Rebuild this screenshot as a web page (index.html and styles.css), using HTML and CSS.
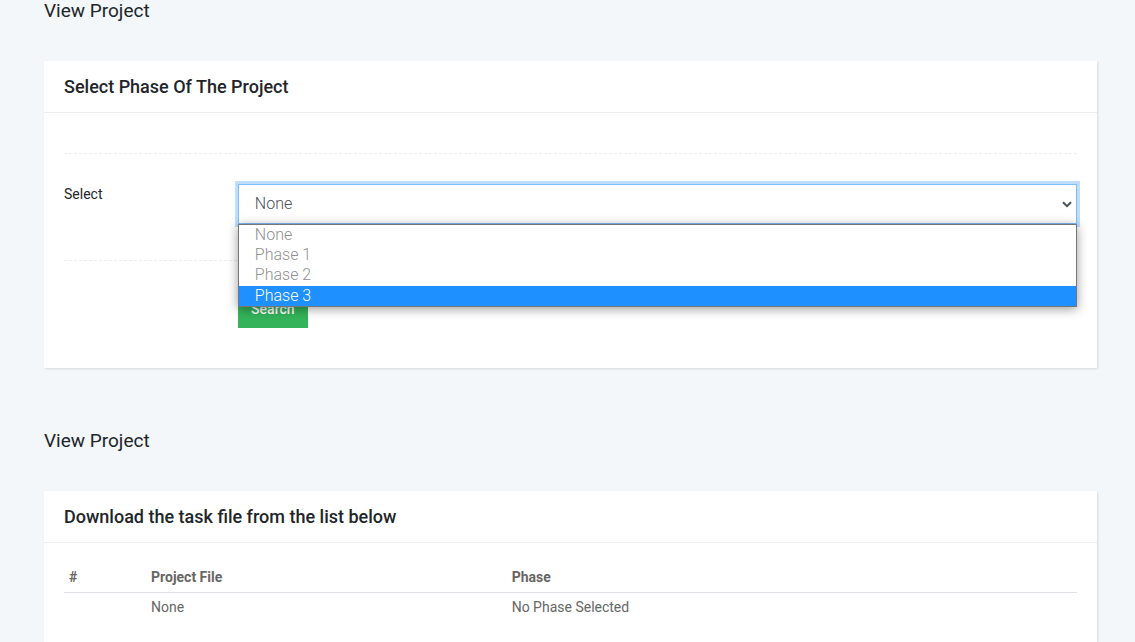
FILE: index.html
```html
<!DOCTYPE html>
<html lang="en">
<head>
<meta charset="utf-8">
<title>View Project</title>
<link rel="stylesheet" href="styles.css">
</head>
<body>
<main class="page">
  <section class="section">
    <h1 class="page-title">View Project</h1>
    <div class="card">
      <div class="card-header"><h2 class="card-title">Select Phase Of The Project</h2></div>
      <form class="card-body form-body">
        <hr class="line">
        <div class="form-row">
          <label class="form-label" for="phase">Select</label>
          <div class="select-wrap">
            <select class="form-select" id="phase">
              <option selected>None</option>
              <option>Phase 1</option>
              <option>Phase 2</option>
              <option>Phase 3</option>
            </select>
            <svg class="chevron" width="10" height="7" viewBox="0 0 10 7" aria-hidden="true"><path d="M1 1.2 L5 5.2 L9 1.2" fill="none" stroke="#495057" stroke-width="2"/></svg>
            <ul class="menu">
              <li class="menu-item">None</li>
              <li class="menu-item">Phase 1</li>
              <li class="menu-item">Phase 2</li>
              <li class="menu-item menu-item-active">Phase 3</li>
            </ul>
          </div>
        </div>
        <hr class="line">
        <div class="form-row">
          <div class="button-cell"><button class="btn" type="button">Search</button></div>
        </div>
      </form>
    </div>
  </section>
  <section class="section">
    <h1 class="page-title">View Project</h1>
    <div class="card">
      <div class="card-header"><h2 class="card-title">Download the task file from the list below</h2></div>
      <div class="card-body">
        <table class="table">
          <colgroup><col class="col-num"><col class="col-file"><col></colgroup>
          <thead><tr><th>#</th><th>Project File</th><th>Phase</th></tr></thead>
          <tbody><tr><td></td><td>None</td><td>No Phase Selected</td></tr></tbody>
        </table>
      </div>
    </div>
  </section>
</main>
</body>
</html>
```
FILE: styles.css
```css
* { box-sizing: border-box; }
body {
  margin: 0;
  background: #f3f7fa;
  color: #212529;
  font-family: Roboto, "Liberation Sans", sans-serif;
  font-size: 14px;
  line-height: 20px;
}
.page { padding: 0 38px 0 44px; }
.section + .section { padding-top: 62px; }
.page-title {
  margin: 0;
  padding-bottom: 40px;
  font-size: 19px;
  font-weight: 400;
  line-height: 21px;
}
.card {
  background: #fff;
  box-shadow: 1px 1px 2px rgba(0, 0, 0, 0.12);
}
.card-header {
  padding: 15px 20px;
  border-bottom: 1px solid #eceeef;
}
.card-title {
  margin: 0;
  font-size: 18px;
  font-weight: 500;
  line-height: 21px;
}
.card-body { padding: 19px 20px 20px; }
.form-body { padding: 40px 20px; }
.line {
  margin: 0;
  border: 0;
  border-top: 1px dashed #eceeef;
}
.form-row {
  display: grid;
  grid-template-columns: calc((100% + 30px) / 6) 1fr;
  padding: 30px 0 36px;
}
.form-row:last-child { padding: 29px 0 0; }
.form-label { font-weight: 400; }
.select-wrap {
  position: relative;
}
.form-select {
  display: block;
  width: 100%;
  height: 40px;
  padding: 0 16px 2px;
  border: 1px solid #80bdff;
  border-radius: 0;
  outline: 0;
  appearance: none;
  background: #fff;
  box-shadow: 0 0 0 3px #bfdeff;
  color: #495057;
  font-family: inherit;
  font-size: 16px;
  font-weight: 300;
}
.chevron {
  position: absolute;
  top: 17px;
  right: 5px;
}
.menu {
  position: absolute;
  top: 40px;
  left: 0;
  right: 0;
  margin: 0;
  padding: 0;
  border: 1px solid #767676;
  background: #fff;
  box-shadow: 0 2px 10px rgba(0, 0, 0, 0.4);
  list-style: none;
  z-index: 1;
}
.menu-item {
  padding: 0 16px;
  color: #909090;
  font-size: 16px;
  font-weight: 300;
  line-height: 20px;
}
.menu-item-active {
  margin-top: 1px;
  background: #1e90ff;
  color: #fff;
}
.button-cell { grid-column: 2; }
.btn {
  height: 38px;
  min-width: 70px;
  padding: 0 13px;
  border: 0;
  background: #34b35a;
  color: #fff;
  font-family: inherit;
  font-size: 14px;
  font-weight: 500;
}
.table {
  width: 100%;
  border-collapse: collapse;
  table-layout: fixed;
  color: #666;
}
.col-num { width: 8.1%; }
.col-file { width: 35.6%; }
.table th,
.table td {
  padding: 5px;
  text-align: left;
}
.table th {
  border-bottom: 1px solid #dee2e6;
  font-weight: 700;
}
.table td { padding-top: 4px; }
```
